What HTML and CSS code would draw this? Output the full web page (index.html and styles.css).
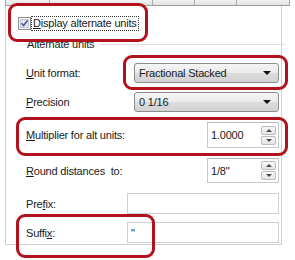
FILE: index.html
```html
<!DOCTYPE html>
<html>
<head>
<meta charset="utf-8">
<link rel="stylesheet" href="styles.css">
</head>
<body>
<div class="tabs">
  <div class="tab t1"></div>
  <div class="tab t2"></div>
  <div class="tab t3"></div>
  <div class="tab t4"></div>
  <div class="tab t5"></div>
</div>
<div class="panel">
  <div class="check-row">
    <svg class="checkbox" width="13" height="13" viewBox="0 0 13 13">
      <rect x="0.5" y="0.5" width="12" height="12" fill="#f4f4f4" stroke="#8e8f8f"/>
      <rect x="2.5" y="2.5" width="8" height="8" fill="#e3e6ee" stroke="#c4c8d4"/>
      <path d="M3.5 6.2 L5.6 8.6 L9.6 3.4" fill="none" stroke="#4b5c95" stroke-width="1.6"/>
    </svg>
    <span class="check-label"><u>D</u>isplay alternate units</span>
  </div>
  <div class="group">
    <div class="legend"><span>Alternate units</span><span class="legend-line"></span></div>
    <div class="rows">
      <div class="row r-unit">
        <span class="label"><u>U</u>nit format:</span>
        <div class="combo"><span>Fractional Stacked</span><span class="arrow"></span></div>
      </div>
      <div class="row r-prec">
        <span class="label"><u>P</u>recision</span>
        <div class="combo"><span>0 1/16</span><span class="arrow"></span></div>
      </div>
      <div class="row r-mult">
        <span class="label"><u>M</u>ultiplier for alt units:</span>
        <div class="spin"><span>1.0000</span><span class="spin-btns"><span class="sb up"></span><span class="sb down"></span></span></div>
      </div>
      <div class="row r-round">
        <span class="label"><u>R</u>ound distances&nbsp; to:</span>
        <div class="spin"><span>1/8"</span><span class="spin-btns"><span class="sb up"></span><span class="sb down"></span></span></div>
      </div>
      <div class="row r-prefix">
        <span class="label">Pre<u>f</u>ix:</span>
        <div class="text-input"></div>
      </div>
      <div class="row r-suffix">
        <span class="label">Suffi<u>x</u>:</span>
        <div class="text-input"><span>"</span></div>
      </div>
    </div>
  </div>
</div>
<div class="hl hl1"></div>
<div class="hl hl2"></div>
<div class="hl hl3"></div>
<div class="hl hl4"></div>
</body>
</html>
```
FILE: styles.css
```css
html, body {
  margin: 0;
  padding: 0;
}
body {
  width: 295px;
  height: 260px;
  background: #fff;
  font-family: "Liberation Sans", Arial, sans-serif;
  font-size: 11px;
  letter-spacing: -0.2px;
  color: #1a1a1a;
  position: relative;
  overflow: hidden;
}
u {
  text-decoration: underline;
  text-underline-offset: 1px;
}
.tabs {
  display: flex;
  height: 6px;
  margin-left: 5px;
  width: 285px;
}
.tab {
  box-sizing: border-box;
  height: 6px;
  background: linear-gradient(#f2f2f2, #e2e2e2);
  border-right: 1px solid #a9a9a9;
  border-bottom: 1px solid #9e9e9e;
}
.t1 { width: 45px; border-left: 1px solid #a9a9a9; }
.t2 { width: 103px; }
.t3 { width: 42px; }
.t4 { width: 42px; }
.t5 { width: 53px; }
.panel {
  box-sizing: border-box;
  margin-left: 5px;
  width: 277px;
  height: 239px;
  border-left: 1px solid #cfcfcf;
  border-right: 1px solid #cfcfcf;
  border-bottom: 1px solid #cfcfcf;
  padding-top: 11px;
}
.check-row {
  display: flex;
  align-items: center;
  height: 13px;
  padding-left: 12px;
}
.checkbox {
  flex: none;
  display: block;
}
.check-label {
  margin-left: 1px;
  padding: 0 1px;
  line-height: 13px;
  outline: 1px dotted #333;
  outline-offset: 0;
}
.group {
  margin-top: 7px;
}
.legend {
  display: flex;
  align-items: center;
  height: 14px;
  padding-left: 21px;
}
.legend-line {
  flex: 1;
  margin-left: 6px;
  border-top: 1px solid #dcdcdc;
  margin-right: -4px;
}
.rows {
  display: flex;
  flex-direction: column;
  padding: 12px 2px 0 20px;
}
.row {
  display: flex;
  align-items: center;
  justify-content: space-between;
}
.r-unit { height: 20px; }
.r-prec { height: 20px; margin-top: 9px; }
.r-mult { height: 26px; margin-top: 10px; }
.r-round { height: 25px; margin-top: 10px; }
.r-prefix { height: 21px; margin-top: 10px; }
.r-suffix { height: 21px; margin-top: 8px; }
.label {
  white-space: nowrap;
}
.combo {
  box-sizing: border-box;
  width: 145px;
  height: 20px;
  border: 1px solid #8d8d8d;
  border-radius: 3px;
  background: linear-gradient(#f5f5f5 0%, #ebebeb 50%, #dcdcdc 51%, #d2d2d2 100%);
  display: flex;
  align-items: center;
  justify-content: space-between;
  padding: 0 7px 0 4px;
}
.arrow {
  width: 0;
  height: 0;
  border-left: 4px solid transparent;
  border-right: 4px solid transparent;
  border-top: 4px solid #111;
}
.spin {
  box-sizing: border-box;
  width: 72px;
  height: 100%;
  border: 1px solid #c6c8cc;
  border-top-color: #b5b7bb;
  background: #fff;
  display: flex;
  align-items: center;
  justify-content: space-between;
  padding: 0 2px 0 3px;
}
.spin-btns {
  display: flex;
  flex-direction: column;
  gap: 1px;
}
.sb {
  box-sizing: border-box;
  width: 15px;
  height: 9px;
  border: 1px solid #b9bcc2;
  border-radius: 2px;
  background: linear-gradient(#f8f8f8, #e4e4e4);
  display: flex;
  align-items: center;
  justify-content: center;
}
.sb::after {
  content: "";
  width: 0;
  height: 0;
  border-left: 3px solid transparent;
  border-right: 3px solid transparent;
}
.up::after { border-bottom: 3px solid #4a4a4a; }
.down::after { border-top: 3px solid #4a4a4a; }
.text-input {
  box-sizing: border-box;
  width: 152px;
  height: 21px;
  border: 1px solid #cdcfd3;
  background: #fff;
  padding: 3px 3px;
  line-height: 14px;
}
.hl {
  position: absolute;
  box-sizing: border-box;
  border: 3px solid #b2121c;
  border-radius: 9px;
}
.hl1 { left: 8px; top: 3px; width: 140px; height: 39px; }
.hl2 { left: 123px; top: 55px; width: 165px; height: 35px; }
.hl3 { left: 16px; top: 117px; width: 272px; height: 39px; }
.hl4 { left: 16px; top: 214px; width: 139px; height: 44px; }
```
